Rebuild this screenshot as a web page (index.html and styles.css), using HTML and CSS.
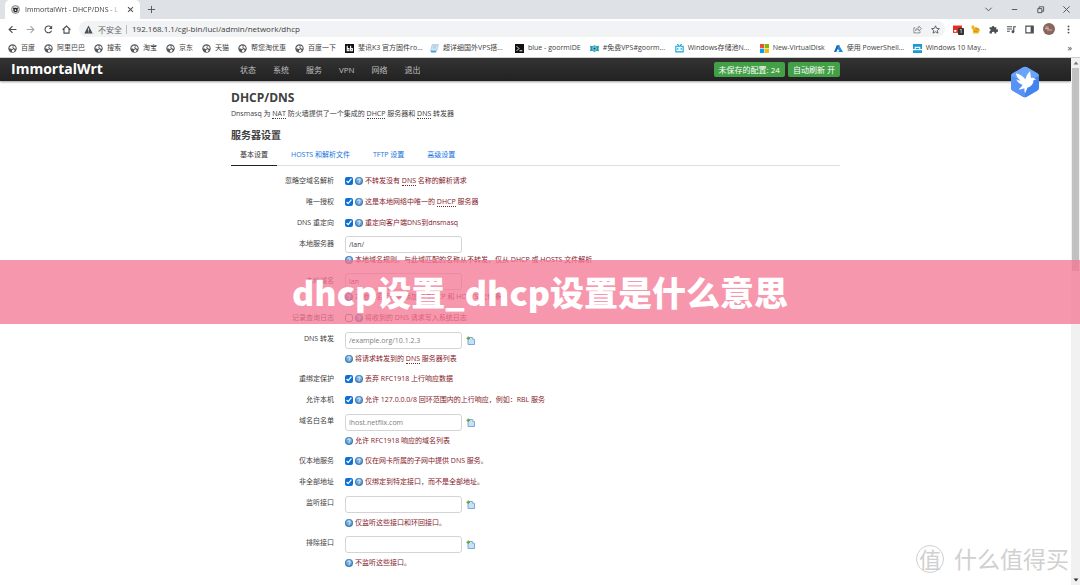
FILE: index.html
```html
<!DOCTYPE html>
<html lang="zh-CN">
<head>
<meta charset="utf-8">
<title>ImmortalWrt - DHCP/DNS - LuCI</title>
<link rel="stylesheet" href="styles.css">
</head>
<body>
<svg class="defs" aria-hidden="true">
  <symbol id="globe" viewBox="0 0 16 16"><circle cx="8" cy="8" r="7.5" fill="#55595e"/><path d="M3 5.5 6.5 2.5 9 3.5 7.5 6 9 7.5 7 9.5 5 8 2.5 8zM10 2.500l3 2.500 1 3.500-2.500-.5L9.500 6.500zM7 11l3-1.500 2 1.500-2 3H7.500z" fill="#fff"/></symbol>
  <symbol id="help" viewBox="0 0 16 16"><circle cx="8" cy="8" r="8" fill="#3d7cb8"/><circle cx="8" cy="7" r="6" fill="#6fa8d8"/><path d="M5.500 6.200c0-3.200 5-3.200 5-.2 0 1.700-2.400 1.700-2.400 3.600M8.100 11v1.800" fill="none" stroke="#fff" stroke-width="1.900"/></symbol>
  <symbol id="add" viewBox="0 0 18 18"><path d="M4 3h9l4 4v10H4z" fill="#c4e1f8" stroke="#5b92cc" stroke-width="1.500"/><path d="M13 3v4h4" fill="#fff" stroke="#5b92cc"/><path d="M4.500 1v7M1 4.500h7" stroke="#64a72c" stroke-width="2.500"/></symbol>
</svg>

<header class="browser">
  <div class="tabstrip">
    <div class="tab">
      <svg class="icon" viewBox="0 0 16 16"><circle cx="8" cy="8" r="7" fill="#ddd" stroke="#777" stroke-width="1.500"/><circle cx="8" cy="9" r="4" fill="#222"/><path d="M4 5l2 2M12 5l-2 2" stroke="#222" stroke-width="2"/><circle cx="8" cy="9" r="1.500" fill="#fff"/></svg>
      <span class="tab-title">ImmortalWrt - DHCP/DNS - L</span>
      <button class="ghost" aria-label="关闭标签页"><svg class="tiny" viewBox="0 0 10 10"><path d="M1.500 1.500l7 7m0-7l-7 7" class="line thick"/></svg></button>
    </div>
    <button class="ghost new-tab" aria-label="新标签页"><svg class="icon" viewBox="0 0 10 10"><path d="M5 1v8M1 5h8" class="line"/></svg></button>
    <div class="window-controls">
      <button class="ghost" aria-label="搜索标签页"><svg class="icon" viewBox="0 0 10 10"><path d="M1.500 3L5 6.500 8.500 3" class="line"/></svg></button>
      <button class="ghost" aria-label="最小化"><svg class="icon" viewBox="0 0 10 10"><path d="M2 5h6" class="line"/></svg></button>
      <button class="ghost" aria-label="还原"><svg class="icon" viewBox="0 0 10 10"><path d="M2 4h4.500v4.500H2zM3.500 4V2h5v5h-2" class="line"/></svg></button>
      <button class="ghost" aria-label="关闭"><svg class="icon" viewBox="0 0 10 10"><path d="M1.500 1.500l7 7m0-7l-7 7" class="line"/></svg></button>
    </div>
  </div>

  <div class="toolbar">
    <div class="nav-buttons">
      <button class="ghost" aria-label="后退"><svg class="icon" viewBox="0 0 16 16"><path d="M15 8H2M8 2L2 8l6 6" class="line bold"/></svg></button>
      <button class="ghost faded" aria-label="前进"><svg class="icon" viewBox="0 0 16 16"><path d="M1 8h13M8 2l6 6-6 6" class="line bold"/></svg></button>
      <button class="ghost" aria-label="重新加载"><svg class="icon" viewBox="0 0 16 16"><path d="M13.500 10A6 6 0 1 1 12.500 4" class="line bold"/><path d="M14.500 1v6h-6z" fill="#4b4f54"/></svg></button>
      <button class="ghost" aria-label="主页"><svg class="icon" viewBox="0 0 16 16"><path d="M1 8.500L8 2l7 6.500M3.500 7v7.500h9V7" class="line bold"/></svg></button>
    </div>
    <div class="omnibox">
      <svg class="icon" viewBox="0 0 16 16"><path d="M8 1l7.500 14H.5z" fill="#4b4f54"/><path d="M8 6v4M8 11.500v1.500" stroke="#fff" stroke-width="1.500"/></svg>
      <span class="insecure">不安全</span>
      <input class="url" aria-label="地址" value="192.168.1.1/cgi-bin/luci/admin/network/dhcp">
      <button class="ghost" aria-label="分享"><svg class="icon" viewBox="0 0 16 16"><path d="M4 5H1.500v9h11v-3M4.500 10c.5-4 3-5 6-5V2l4.500 4.500-4.500 4V8c-3 0-5 .5-6 2z" class="line"/></svg></button>
      <button class="ghost" aria-label="收藏"><svg class="icon" viewBox="0 0 16 16"><path d="M8 1.500l2 4.500 5 .5-3.800 3.300 1.200 4.700L8 12l-4.400 2.500 1.200-4.700L1 6.500 6 6z" class="line thick"/></svg></button>
    </div>
    <div class="extensions">
      <button class="ghost badge-host" aria-label="扩展"><svg class="icon" viewBox="0 0 16 16"><path d="M0 1h16v13H0z" fill="#e12d25"/><path d="M2 9h4v3H2zM10 9h4v3h-4z" fill="#fff"/></svg><span class="badge">1</span></button>
      <button class="ghost" aria-label="书签扩展"><svg class="icon" viewBox="0 0 16 16"><path d="M1 1h5v4l8 1 2 3-3 6H4L3 8 1 6z" fill="#f1b51c"/><path d="M7 5h3v2h4M5 11h7" stroke="#c27e0f" stroke-width="1.500" fill="none"/></svg></button>
      <button class="ghost" aria-label="扩展程序"><svg class="icon" viewBox="0 0 16 16"><path d="M1 4h4a2.200 2.200 0 1 1 4.500 0H13v4a2.200 2.200 0 1 1 0 4v3H9.500a2.200 2.200 0 1 0-4 0H1v-4a2 2 0 1 0 0-4z" fill="#4b4f54"/></svg></button>
      <button class="ghost" aria-label="媒体控制"><svg class="icon" viewBox="0 0 16 16"><path d="M0 3h9M0 7h9M0 11h5M12 12V3h4" class="line bold"/><circle cx="10.500" cy="12" r="2.500" fill="#4b4f54"/></svg></button>
      <button class="ghost" aria-label="侧边栏"><svg class="icon" viewBox="0 0 16 16"><path d="M1.500 2h13v12h-13z" class="line bold"/><path d="M10 2h5v12h-5z" fill="#4b4f54"/></svg></button>
      <button class="ghost" aria-label="用户"><svg class="avatar" viewBox="0 0 24 24"><circle cx="12" cy="12" r="12" fill="#89665d"/><path d="M4 11h8M8 14h10M5 8h6" stroke="#cfb9ad" stroke-width="2"/></svg></button>
      <button class="ghost" aria-label="菜单"><svg class="icon" viewBox="0 0 16 16"><g fill="#4b4f54"><circle cx="8" cy="2.500" r="1.700"/><circle cx="8" cy="8" r="1.700"/><circle cx="8" cy="13.500" r="1.700"/></g></svg></button>
    </div>
  </div>

  <nav class="bookmarks" aria-label="书签">
    <a href="#"><svg class="icon"><use href="#globe"/></svg>百度</a>
    <a href="#"><svg class="icon"><use href="#globe"/></svg>阿里巴巴</a>
    <a href="#"><svg class="icon"><use href="#globe"/></svg>搜索</a>
    <a href="#"><svg class="icon"><use href="#globe"/></svg>淘宝</a>
    <a href="#"><svg class="icon"><use href="#globe"/></svg>京东</a>
    <a href="#"><svg class="icon"><use href="#globe"/></svg>天猫</a>
    <a href="#"><svg class="icon"><use href="#globe"/></svg>帮您淘优惠</a>
    <a href="#"><svg class="icon"><use href="#globe"/></svg>百度一下</a>
    <a href="#" class="long"><svg class="icon" viewBox="0 0 16 16"><path d="M0 0h16v16H0z" fill="#111"/><path d="M4 3v9h3V8H4M10 3v9h3V8h-3" fill="none" stroke="#fff" stroke-width="2"/></svg>斐讯K3 官方固件ro...</a>
    <a href="#" class="long"><svg class="icon" viewBox="0 0 16 16"><path d="M4 1h11l-3 11H1z" fill="#cfe6f5" stroke="#8ab6d6"/><path d="M1 12h10v3H2z" fill="#4d9ed8"/><path d="M6 4h5M5 7h5" stroke="#7ca8c8"/></svg>超详细国外VPS搭...</a>
    <a href="#"><svg class="icon" viewBox="0 0 16 16"><path d="M0 0h16v16H0z" fill="#111"/><path d="M3 4l4 4-4 4M8 12h5" fill="none" stroke="#fff" stroke-width="1.700"/></svg>blue - goormIDE</a>
    <a href="#" class="long"><svg class="icon" viewBox="0 0 16 16"><path d="M0 3l4 1 4-2 4 2 4-1-1 5 1 5-4-1-4 2-4-2-4 1 1-5z" fill="#1796af"/><circle cx="8" cy="8" r="4" fill="#85d6e3"/><circle cx="8" cy="8" r="2" fill="#174d63"/></svg>#免费VPS#goorm...</a>
    <a href="#" class="long"><svg class="icon" viewBox="0 0 16 16"><path d="M4 0l3 3M12 0L9 3M1.500 4h13v10h-13zM5 7v3M11 7v3" fill="none" stroke="#16a6d8" stroke-width="2"/></svg>Windows存储池N...</a>
    <a href="#"><svg class="icon" viewBox="0 0 16 16"><path d="M0 0h7.500v7.500H0z" fill="#ee5125"/><path d="M8.500 0H16v7.500H8.500z" fill="#7fba00"/><path d="M0 8.500h7.500V16H0z" fill="#00a4ef"/><path d="M8.500 8.500H16V16H8.500z" fill="#ffb900"/></svg>New-VirtualDisk</a>
    <a href="#" class="mid"><svg class="icon" viewBox="0 0 16 16"><path d="M5 2h5L4 14H0z" fill="#1666b5"/><path d="M9 2l7 12H5l5-1-3-4z" fill="#198be2"/></svg>使用 PowerShell...</a>
    <a href="#" class="long"><svg class="icon" viewBox="0 0 16 16"><path d="M0 0h16v16H0z" fill="#159bd5"/><path d="M0 9h3V5h10v4h3v2H0z" fill="#fff"/><path d="M5 7h6v2H5z" fill="#159bd5"/></svg>Windows 10 May...</a>
    <button class="ghost more" aria-label="更多书签">»</button>
  </nav>
</header>

<div class="viewport">
  <div class="page">
    <header class="site-header">
      <a class="brand" href="#">ImmortalWrt</a>
      <div class="site-bar">
        <nav class="menu" aria-label="主菜单">
          <a href="#">状态</a><a href="#">系统</a><a href="#">服务</a><a href="#">VPN</a><a href="#">网络</a><a href="#">退出</a>
        </nav>
        <div class="status">
          <button class="pill">未保存的配置: 24</button>
          <button class="pill">自动刷新 开</button>
        </div>
      </div>
    </header>

    <main class="content">
      <h1>DHCP/DNS</h1>
      <p class="intro">Dnsmasq 为 <abbr>NAT</abbr> 防火墙提供了一个集成的 <abbr>DHCP</abbr> 服务器和 <abbr>DNS</abbr> 转发器</p>
      <h2>服务器设置</h2>
      <nav class="tabs" aria-label="设置">
        <a class="active" href="#">基本设置</a>
        <a href="#">HOSTS 和解析文件</a>
        <a href="#">TFTP 设置</a>
        <a href="#">高级设置</a>
      </nav>

      <form class="settings">
        <div class="row">
          <label for="f1">忽略空域名解析</label>
          <div class="check"><input type="checkbox" id="f1" checked><svg class="hint"><use href="#help"/></svg><span>不转发没有 <abbr>DNS</abbr> 名称的解析请求</span></div>
        </div>
        <div class="row">
          <label for="f2">唯一授权</label>
          <div class="check"><input type="checkbox" id="f2" checked><svg class="hint"><use href="#help"/></svg><span>这是本地网络中唯一的 <abbr>DHCP</abbr> 服务器</span></div>
        </div>
        <div class="row">
          <label for="f3">DNS 重定向</label>
          <div class="check"><input type="checkbox" id="f3" checked><svg class="hint"><use href="#help"/></svg><span>重定向客户端DNS到dnsmasq</span></div>
        </div>
        <div class="row">
          <label for="f4">本地服务器</label>
          <div class="field"><input type="text" id="f4" value="/lan/">
            <p class="help"><svg class="hint"><use href="#help"/></svg><span>本地域名规则。与此域匹配的名称从不转发，仅从 DHCP 或 HOSTS 文件解析</span></p></div>
        </div>
        <div class="row">
          <label for="f5">本地域名</label>
          <div class="field"><input type="text" id="f5" value="lan">
            <p class="help"><svg class="hint"><use href="#help"/></svg><span>本地域名后缀将添加到 DHCP 和 HOSTS 文件条目</span></p></div>
        </div>
        <div class="row">
          <label for="f6">记录查询日志</label>
          <div class="check"><input type="checkbox" id="f6"><svg class="hint"><use href="#help"/></svg><span>将收到的 DNS 请求写入系统日志</span></div>
        </div>
        <div class="row">
          <label for="f7">DNS 转发</label>
          <div class="field list"><div class="entry"><input type="text" id="f7" placeholder="/example.org/10.1.2.3"><button type="button" class="ghost" aria-label="添加"><svg class="icon"><use href="#add"/></svg></button></div>
            <p class="help"><svg class="hint"><use href="#help"/></svg><span>将请求转发到的 <abbr>DNS</abbr> 服务器列表</span></p></div>
        </div>
        <div class="row">
          <label for="f8">重绑定保护</label>
          <div class="check"><input type="checkbox" id="f8" checked><svg class="hint"><use href="#help"/></svg><span>丢弃 RFC1918 上行响应数据</span></div>
        </div>
        <div class="row">
          <label for="f9">允许本机</label>
          <div class="check"><input type="checkbox" id="f9" checked><svg class="hint"><use href="#help"/></svg><span>允许 127.0.0.0/8 回环范围内的上行响应，例如：RBL 服务</span></div>
        </div>
        <div class="row">
          <label for="f10">域名白名单</label>
          <div class="field list"><div class="entry"><input type="text" id="f10" placeholder="ihost.netflix.com"><button type="button" class="ghost" aria-label="添加"><svg class="icon"><use href="#add"/></svg></button></div>
            <p class="help"><svg class="hint"><use href="#help"/></svg><span>允许 RFC1918 响应的域名列表</span></p></div>
        </div>
        <div class="row">
          <label for="f11">仅本地服务</label>
          <div class="check"><input type="checkbox" id="f11" checked><svg class="hint"><use href="#help"/></svg><span>仅在网卡所属的子网中提供 DNS 服务。</span></div>
        </div>
        <div class="row">
          <label for="f12">非全部地址</label>
          <div class="check"><input type="checkbox" id="f12" checked><svg class="hint"><use href="#help"/></svg><span>仅绑定到特定接口，而不是全部地址。</span></div>
        </div>
        <div class="row">
          <label for="f13">监听接口</label>
          <div class="field list"><div class="entry"><input type="text" id="f13"><button type="button" class="ghost" aria-label="添加"><svg class="icon"><use href="#add"/></svg></button></div>
            <p class="help"><svg class="hint"><use href="#help"/></svg><span>仅监听这些接口和环回接口。</span></p></div>
        </div>
        <div class="row">
          <label for="f14">排除接口</label>
          <div class="field list"><div class="entry"><input type="text" id="f14"><button type="button" class="ghost" aria-label="添加"><svg class="icon"><use href="#add"/></svg></button></div>
            <p class="help"><svg class="hint"><use href="#help"/></svg><span>不监听这些接口。</span></p></div>
        </div>
      </form>
    </main>
  </div>
  <div class="scrollbar" aria-hidden="true">
    <svg class="arrow" viewBox="0 0 10 10"><path d="M2 7l3-4 3 4z" fill="#777"/></svg>
    <div class="thumb"></div>
    <svg class="arrow" viewBox="0 0 10 10"><path d="M2 3l3 4 3-4z" fill="#333"/></svg>
  </div>
</div>

<svg class="bird" viewBox="0 0 90 96" aria-hidden="true">
  <path d="M45 2q3 0 6 2l31 18q5 3 5 8v36q0 5-5 8L51 92q-6 3-12 0L8 74q-5-3-5-8V30q0-5 5-8L39 4q3-2 6-2z" fill="#4285ee"/>
  <path d="M45 2q3 0 6 2l31 18q5 3 5 8L45 48 3 30q0-5 5-8L39 4q3-2 6-2z" fill="#6aa4fa"/>
  <path d="M3 66V30l42 18v46q-3 0-6-2L8 74q-5-3-5-8z" fill="#5793f5"/>
  <path d="M18 22q18 5 28 18 4-15 14-25 2 12 3 21 4-2 8 0l8 4-8 2q-2 20-19 23-3 9-7 17-2-8-2-15-8 4-17 3 8-6 12-13-14-4-19-17 6 4 12 4Q19 34 18 22z" fill="#fff"/>
</svg>

<div class="watermark"><span class="mark">值</span><span>什么值得买</span></div>
<div class="banner">dhcp设置_dhcp设置是什么意思</div>
</body>
</html>
```
FILE: styles.css
```css
* { box-sizing: border-box; }
html, body { height: 100%; }
body {
  margin: 0;
  display: flex;
  flex-direction: column;
  position: relative;
  overflow: hidden;
  background: #fff;
  color: #404040;
  font: 7px/14px "Open Sans", "Noto Sans CJK SC", sans-serif;
}
h1, h2, p { margin: 0; }
a { color: inherit; text-decoration: none; }
button, input { font: inherit; color: inherit; }
.defs { position: absolute; width: 0; height: 0; }
.icon { width: 9px; height: 9px; flex: none; display: block; }
.tiny { width: 7px; height: 7px; display: block; }
.line { fill: none; stroke: #4b4f54; stroke-width: 1; }
.thick { stroke-width: 1.5; }
.bold { stroke-width: 2; }
.ghost {
  display: flex;
  align-items: center;
  justify-content: center;
  padding: 0;
  border: 0;
  background: none;
}
.faded { opacity: .5; }

/* Browser chrome */
.browser { flex: none; }
.tabstrip { display: flex; height: 19px; background: #dee1e6; }
.tab {
  display: flex;
  align-items: center;
  gap: 5px;
  width: 135px;
  margin-left: 5px;
  padding: 0 6px;
  border-radius: 5px 5px 0 0;
  background: #fff;
}
.tab-title {
  flex: 1;
  white-space: nowrap;
  mask-image: linear-gradient(90deg, #000 85%, transparent);
}
.new-tab { margin-left: 7px; }
.window-controls { display: flex; gap: 17px; margin-left: auto; padding-right: 9px; }
.toolbar { display: flex; align-items: center; height: 20px; padding: 0 8px; }
.nav-buttons { display: flex; gap: 9px; width: 71px; }
.omnibox {
  flex: 1;
  display: flex;
  align-items: center;
  gap: 5px;
  height: 16px;
  padding: 0 5px;
  border-radius: 8px;
  background: #f1f3f4;
}
.omnibox .ghost { margin-left: 4px; }
.insecure { padding-right: 4px; border-right: 1px solid #bbb; font-size: 8px; line-height: 9px; color: #666; }
.url { flex: 1; min-width: 0; padding: 0; border: 0; background: none; font-size: 8px; }
.extensions { display: flex; align-items: center; gap: 9px; padding-left: 8px; }
.avatar { width: 12px; height: 12px; }
.extensions .ghost:last-child { width: 8px; }
.badge-host { position: relative; }
.badge {
  position: absolute;
  left: 5px;
  top: 3px;
  width: 6px;
  height: 7px;
  border-radius: 1px;
  background: #333;
  color: #fff;
  font-size: 6px;
  line-height: 7px;
}
.bookmarks { display: flex; align-items: center; gap: 9px; height: 18px; padding: 0 8px; }
.bookmarks a { display: flex; align-items: center; gap: 4px; white-space: nowrap; }
.bookmarks .long { width: 76px; }
.bookmarks .mid { width: 70px; }
.more { margin-left: auto; font-size: 9px; }

/* Page */
.viewport { flex: 1; display: flex; min-height: 0; border-top: 1px solid #ccc; }
.page { flex: 1; min-width: 0; overflow: hidden; }
.site-header {
  position: relative;
  display: flex;
  justify-content: center;
  height: 23px;
  background: linear-gradient(#333, #222);
  box-shadow: 0 1px 2px rgba(0, 0, 0, .4);
}
.brand { position: absolute; left: 11px; top: 0; color: #fff; font-size: 14px; line-height: 22px; font-weight: 700; }
.site-bar { display: flex; align-items: center; justify-content: space-between; width: 609px; padding-left: 9px; }
.menu { display: flex; gap: 17px; color: #bfbfbf; font-size: 8px; }
.status { display: flex; gap: 3px; }
.pill {
  height: 15px;
  padding: 0 5px;
  border: 0;
  border-radius: 2px;
  background: #43a047;
  color: #fff;
  font-size: 8px;
  line-height: 15px;
  white-space: nowrap;
}
.content { width: 609px; margin: 0 auto; padding-top: 8px; }
h1 { font-size: 12px; line-height: 18px; }
.intro { padding-bottom: 5px; }
abbr { border-bottom: 1px dotted currentColor; }
h2 { font-size: 10px; line-height: 18px; }
.tabs { display: flex; height: 22px; border-bottom: 1px solid #ddd; color: #1673e0; line-height: 22px; }
.tabs a { height: 22px; padding: 0 9px; margin-right: 5px; }
.tabs .active { border-bottom: 1px solid #222; color: #333; }
.settings { padding-top: 5px; }
.row { display: grid; grid-template-columns: 103px 1fr; column-gap: 11px; }
.row label { text-align: right; line-height: 20px; }
.check, .help { display: flex; align-items: center; gap: 2px; color: #842029; }
.check { height: 21px; padding-bottom: 1px; }
.check input { width: 8px; height: 8px; margin: 0; accent-color: #0b6fd6; }
.hint { width: 8px; height: 8px; flex: none; }
.field { padding: 2px 0 4px; }
.field.list { padding: 3px 0; }
.entry { display: flex; align-items: center; gap: 4px; padding-bottom: 3px; }
.field input {
  display: block;
  width: 117px;
  height: 17px;
  padding: 0 3px;
  border: 1px solid #d4d4d4;
  border-radius: 3px;
  background: #fff;
}
.field input::placeholder { color: #808080; opacity: 1; }

.scrollbar { flex: none; display: flex; flex-direction: column; align-items: center; width: 9px; background: #f1f1f1; }
.arrow { width: 8px; height: 10px; flex: none; }
.thumb { width: 7px; height: 203px; margin-bottom: auto; background: #c1c1c1; }

/* Floating layers */
.bird { position: absolute; right: 40px; top: 66px; width: 30px; height: 32px; }
.watermark {
  position: absolute;
  right: 11px;
  bottom: 9px;
  display: flex;
  align-items: center;
  gap: 10px;
  color: #d0d0d0;
  font-size: 23px;
  line-height: 34px;
}
.mark {
  width: 28px;
  height: 28px;
  border: 1px solid #d0d0d0;
  border-radius: 50%;
  font-size: 22px;
  line-height: 26px;
  text-align: center;
}
.banner {
  position: absolute;
  left: 0;
  right: 0;
  top: 260px;
  height: 64px;
  background: rgba(244, 116, 146, .75);
  color: #fff;
  font: 900 34px/64px "Noto Sans CJK SC", sans-serif;
  text-align: center;
  white-space: nowrap;
}
```
